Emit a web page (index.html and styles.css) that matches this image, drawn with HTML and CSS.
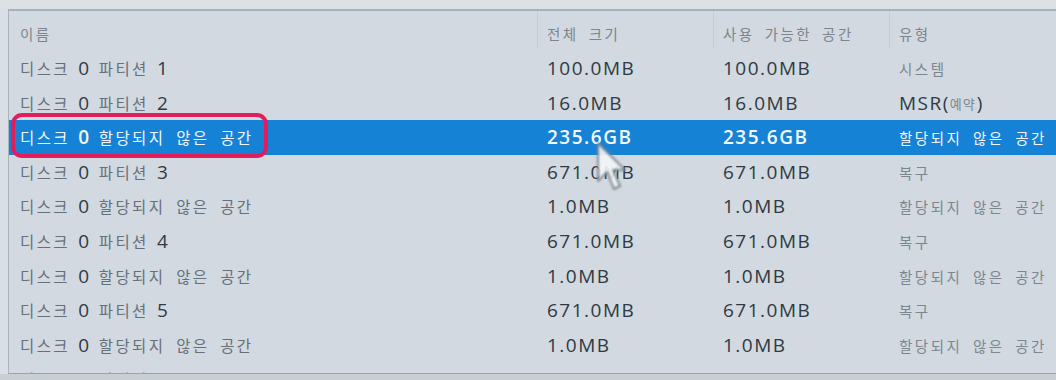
FILE: index.html
```html
<!DOCTYPE html>
<html lang="ko">
<head>
<meta charset="utf-8">
<link rel="stylesheet" href="styles.css">
</head>
<body>
<div class="screen">
  <div class="topbar"></div>
  <div class="panel">
    <div class="row header">
      <div class="c name"><span class="k">이름</span></div>
      <div class="c sep"><span class="k">전체 크기</span></div>
      <div class="c sep"><span class="k">사용 가능한 공간</span></div>
      <div class="c sep"><span class="k">유형</span></div>
    </div>
    <div class="row">
      <div class="c name"><span class="k">디스크</span> <span class="n">0</span> <span class="k">파티션</span> <span class="n">1</span></div>
      <div class="c"><span class="n">100.0MB</span></div>
      <div class="c"><span class="n">100.0MB</span></div>
      <div class="c"><span class="t">시스템</span></div>
    </div>
    <div class="row">
      <div class="c name"><span class="k">디스크</span> <span class="n">0</span> <span class="k">파티션</span> <span class="n">2</span></div>
      <div class="c"><span class="n">16.0MB</span></div>
      <div class="c"><span class="n">16.0MB</span></div>
      <div class="c"><span class="n">MSR(</span><span class="t small">예약</span><span class="n">)</span></div>
    </div>
    <div class="row selected">
      <div class="c name"><span class="k">디스크</span> <span class="n">0</span> <span class="k">할당되지 않은 공간</span></div>
      <div class="c"><span class="n">235.6GB</span></div>
      <div class="c"><span class="n">235.6GB</span></div>
      <div class="c"><span class="t">할당되지 않은 공간</span></div>
    </div>
    <div class="row">
      <div class="c name"><span class="k">디스크</span> <span class="n">0</span> <span class="k">파티션</span> <span class="n">3</span></div>
      <div class="c"><span class="n">671.0MB</span></div>
      <div class="c"><span class="n">671.0MB</span></div>
      <div class="c"><span class="t">복구</span></div>
    </div>
    <div class="row">
      <div class="c name"><span class="k">디스크</span> <span class="n">0</span> <span class="k">할당되지 않은 공간</span></div>
      <div class="c"><span class="n">1.0MB</span></div>
      <div class="c"><span class="n">1.0MB</span></div>
      <div class="c"><span class="t">할당되지 않은 공간</span></div>
    </div>
    <div class="row">
      <div class="c name"><span class="k">디스크</span> <span class="n">0</span> <span class="k">파티션</span> <span class="n">4</span></div>
      <div class="c"><span class="n">671.0MB</span></div>
      <div class="c"><span class="n">671.0MB</span></div>
      <div class="c"><span class="t">복구</span></div>
    </div>
    <div class="row">
      <div class="c name"><span class="k">디스크</span> <span class="n">0</span> <span class="k">할당되지 않은 공간</span></div>
      <div class="c"><span class="n">1.0MB</span></div>
      <div class="c"><span class="n">1.0MB</span></div>
      <div class="c"><span class="t">할당되지 않은 공간</span></div>
    </div>
    <div class="row">
      <div class="c name"><span class="k">디스크</span> <span class="n">0</span> <span class="k">파티션</span> <span class="n">5</span></div>
      <div class="c"><span class="n">671.0MB</span></div>
      <div class="c"><span class="n">671.0MB</span></div>
      <div class="c"><span class="t">복구</span></div>
    </div>
    <div class="row">
      <div class="c name"><span class="k">디스크</span> <span class="n">0</span> <span class="k">할당되지 않은 공간</span></div>
      <div class="c"><span class="n">1.0MB</span></div>
      <div class="c"><span class="n">1.0MB</span></div>
      <div class="c"><span class="t">할당되지 않은 공간</span></div>
    </div>
    <div class="row">
      <div class="c name"><span class="k">디스크</span> <span class="n">0</span> <span class="k">파티션</span> <span class="n">6</span></div>
      <div class="c"><span class="n">755.0MB</span></div>
      <div class="c"><span class="n">755.0MB</span></div>
      <div class="c"><span class="t">복구</span></div>
    </div>
  </div>
  <div class="bottombar"></div>
  <div class="callout"></div>
  <svg class="cursor" width="34" height="54" viewBox="0 0 34 54">
    <path d="M3 2 L3 40 L12 31 L19 48 L25 45 L18 29 L30 29 Z" fill="#f4f6f8" stroke="#7d858c" stroke-width="2" stroke-linejoin="round"/>
  </svg>
</div>
</body>
</html>
```

FILE: styles.css
```css
html, body {
  margin: 0;
  padding: 0;
}
body {
  width: 1056px;
  height: 380px;
  overflow: hidden;
  background: #d9dfe4;
}
.screen {
  position: relative;
  width: 1056px;
  height: 380px;
  display: flex;
  flex-direction: column;
  background: #d9dfe4;
}
.topbar {
  height: 9px;
  background: #dce1e5;
  flex: none;
}
.panel {
  flex: none;
  height: 362px;
  margin-left: 8px;
  border-top: 2px solid #a6b1bb;
  border-left: 1px solid #a9b3bc;
  border-bottom: 1px solid #9aa4ad;
  background: #d2d9e0;
  overflow: hidden;
}
.bottombar {
  flex: 1;
  background: #c9ced3;
}
.row {
  display: grid;
  grid-template-columns: 528px 176px 176px 1fr;
  height: 34.6px;
}
.row.header {
  height: 40px;
}
.c {
  padding-left: 10px;
  white-space: nowrap;
  line-height: 31px;
  height: 34.6px;
  box-sizing: border-box;
  font-family: "Noto Sans CJK KR", "Noto Sans", sans-serif;
  font-size: 15px;
  word-spacing: 4px;
  overflow: hidden;
}
.c.name {
  padding-left: 11px;
}
.header .c {
  border-left: 1px solid #c4ccd4;
  padding-left: 9px;
  height: 38px;
  line-height: 41px;
}
.header .c.name {
  border-left: none;
  padding-left: 11px;
}
.header .k {
  color: #7c858e;
  font-size: 14.5px;
  letter-spacing: 2.5px;
  word-spacing: 3.4px;
}
.k, .t {
  font-family: "Noto Sans CJK KR", "Noto Sans", sans-serif;
  font-size: 15.5px;
  letter-spacing: 2.4px;
  color: #66707a;
  word-spacing: 4px;
  vertical-align: middle;
}
.t {
  font-size: 14.5px;
  color: #7d868f;
  letter-spacing: 2.5px;
  word-spacing: 4px;
}
.t.small {
  font-size: 13px;
  letter-spacing: 1px;
  margin: 0 1px 0 0;
}
.n {
  font-family: "Open Sans", "Noto Sans", sans-serif;
  font-size: 19px;
  letter-spacing: 1.5px;
  color: #2f3a44;
  vertical-align: middle;
  word-spacing: 0;
}
.selected {
  background: #1682d5;
}
.selected .k,
.selected .t,
.selected .n {
  color: #f2f7fc;
}
.selected .n {
  font-weight: 600;
}
.callout {
  position: absolute;
  left: 11px;
  top: 113px;
  width: 257px;
  height: 45px;
  box-sizing: border-box;
  border: 4px solid #e31c5b;
  border-radius: 11px;
}
.cursor {
  position: absolute;
  left: 595px;
  top: 141px;
  filter: blur(0.8px);
  opacity: 0.9;
}
```
